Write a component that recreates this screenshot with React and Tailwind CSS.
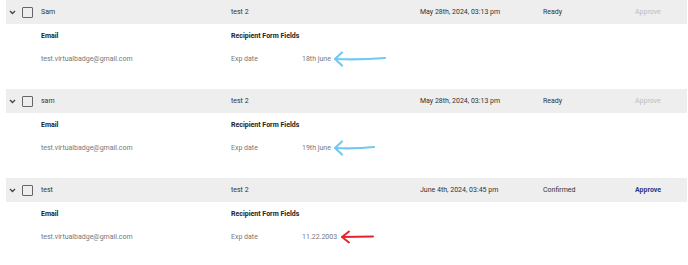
const rows = [
  {
    name: "Sam",
    template: "test 2",
    date: "May 28th, 2024, 03:13 pm",
    status: "Ready",
    approvable: false,
    email: "test.virtualbadge@gmail.com",
    expDate: "18th june",
    arrow: "blue-long",
  },
  {
    name: "sam",
    template: "test 2",
    date: "May 28th, 2024, 03:13 pm",
    status: "Ready",
    approvable: false,
    email: "test.virtualbadge@gmail.com",
    expDate: "19th june",
    arrow: "blue-short",
  },
  {
    name: "test",
    template: "test 2",
    date: "June 4th, 2024, 03:45 pm",
    status: "Confirmed",
    approvable: true,
    email: "test.virtualbadge@gmail.com",
    expDate: "11.22.2003",
    arrow: "red",
  },
];

function Arrow({ kind }) {
  if (kind === "red") {
    return (
      <svg width="36" height="14" viewBox="0 0 36 14" className="ml-[3px]">
        <path d="M2 7 L33 6.5" stroke="#e3262b" strokeWidth="2" fill="none" strokeLinecap="round" />
        <path d="M9 1.5 L2 7 L9 12.5" stroke="#e3262b" strokeWidth="2" fill="none" strokeLinecap="round" strokeLinejoin="round" />
      </svg>
    );
  }
  const w = kind === "blue-long" ? 54 : 43;
  return (
    <svg width={w} height="16" viewBox={`0 0 ${w} 16`} className="ml-[2px]">
      <path d={`M2 8 Q ${w / 2} 9 ${w - 2} 7`} stroke="#72c8f4" strokeWidth="2.2" fill="none" strokeLinecap="round" />
      <path d="M9 1.5 L2 8 L9 14.5" stroke="#72c8f4" strokeWidth="2.2" fill="none" strokeLinecap="round" strokeLinejoin="round" />
    </svg>
  );
}

function Row({ row }) {
  return (
    <div>
      <div className="flex items-center h-[24px] bg-[#eeeeee] text-[7px] text-[#333] whitespace-nowrap">
        <div className="w-[12px] flex justify-center">
          <svg width="7" height="5" viewBox="0 0 7 5">
            <path d="M1 1 L3.5 3.5 L6 1" stroke="#444" strokeWidth="1.3" fill="none" />
          </svg>
        </div>
        <div className="ml-[4px] w-[11px] h-[11px] border-[1.3px] border-[#666] rounded-[1px]" />
        <div className="ml-[8px] w-[190px]">{row.name}</div>
        <div className="w-[189px]">{row.template}</div>
        <div className="w-[123px]">{row.date}</div>
        <div className="w-[92px]">{row.status}</div>
        <div className={row.approvable ? "font-bold text-[#1f3c88]" : "text-[#bdbdbd]"}>Approve</div>
      </div>
      <div className="h-[65px] flex text-[7px] whitespace-nowrap">
        <div className="ml-[35px] w-[190px] pt-[6px]">
          <div className="font-bold text-[#222] h-[12px] leading-[12px]">Email</div>
          <div className="mt-[11px] text-[#777] h-[12px] leading-[12px]">{row.email}</div>
        </div>
        <div className="pt-[6px]">
          <div className="font-bold text-[#222] h-[12px] leading-[12px]">Recipient Form Fields</div>
          <div className="mt-[11px] flex items-center text-[#777] h-[12px] leading-[12px]">
            <span className="w-[71px]">Exp date</span>
            <span>{row.expDate}</span>
            <Arrow kind={row.arrow} />
          </div>
        </div>
      </div>
    </div>
  );
}

export default function App() {
  return (
    <div className="w-[688px] h-[265px] bg-white pl-[6px] pr-[1px]" style={{ fontFamily: "Roboto, 'Liberation Sans', sans-serif" }}>
      {rows.map((row, i) => (
        <Row key={i} row={row} />
      ))}
    </div>
  );
}
